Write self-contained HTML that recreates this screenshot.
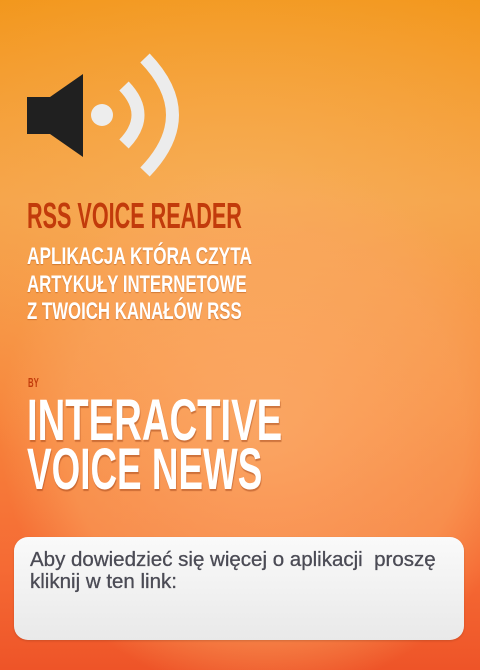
<!DOCTYPE html>
<html><head><meta charset="utf-8"><style>
html,body{margin:0;padding:0}
body{width:480px;height:670px;overflow:hidden;position:relative;font-family:"Liberation Sans",sans-serif;
background:
radial-gradient(circle at 265px 430px, rgba(252,175,110,0.75) 0px, rgba(250,165,95,0.55) 200px, rgba(250,160,90,0.0) 265px),
radial-gradient(ellipse 420px 300px at 240px 200px, rgba(250,190,110,0.45), rgba(250,190,110,0) 100%),
linear-gradient(180deg,#f29518 0%,#f5a045 30%,#f7863c 60%,#f56a34 85%,#ee5428 100%);}
.t{position:absolute;left:27px;white-space:nowrap;transform-origin:0 0;line-height:1}
.h1{top:198px;font-size:36px;font-weight:bold;color:#c23b0b;transform:scaleX(0.60)}
.sub{font-size:24px;font-weight:bold;color:#fff;transform:scaleX(0.72);text-shadow:0 1px 1px rgba(150,60,0,0.4)}
.by{top:376px;left:28px;font-size:13px;font-weight:bold;color:#c23b0b;transform:scaleX(0.6)}
.big{font-size:58px;font-weight:bold;color:#fff;transform:scaleX(0.66);text-shadow:1px 2px 1px rgba(150,60,20,0.45)}
.box{position:absolute;left:14px;top:537px;width:450px;height:103px;border-radius:14px;
background:linear-gradient(#fafafa,#e9e9e9);box-shadow:0 1px 2px rgba(0,0,0,0.15)}
.box p{margin:0;position:absolute;left:16px;top:12px;white-space:nowrap;font-size:20.5px;line-height:22px;color:#4b4b55;-webkit-text-stroke:0.3px #4b4b55}
</style></head><body>
<svg style="position:absolute;left:0;top:0" width="480" height="200">
<path d="M27 97 H50 L83 74 V157 L50 134 H27 Z" fill="#202020"/>
<circle cx="102" cy="115" r="11" fill="#ededed"/>
<path d="M124 86 Q152 115 124 144" stroke="#ececec" stroke-width="13" fill="none"/>
<path d="M145 58 Q200 115 145 172" stroke="#ececec" stroke-width="13" fill="none"/>
</svg>
<div class="t h1">RSS VOICE READER</div>
<div class="t sub" style="top:245px">APLIKACJA KTÓRA CZYTA</div>
<div class="t sub" style="top:273px;transform:scaleX(0.70)">ARTYKUŁY INTERNETOWE</div>
<div class="t sub" style="top:300px;transform:scaleX(0.70)">Z TWOICH KANAŁÓW RSS</div>
<div class="t by">BY</div>
<div class="t big" style="top:392px">INTERACTIVE</div>
<div class="t big" style="top:441px;transform:scaleX(0.635)">VOICE NEWS</div>
<div class="box"><p>Aby dowiedzieć się więcej o aplikacji &nbsp;proszę<br>kliknij w ten link:</p></div>
</body></html>
